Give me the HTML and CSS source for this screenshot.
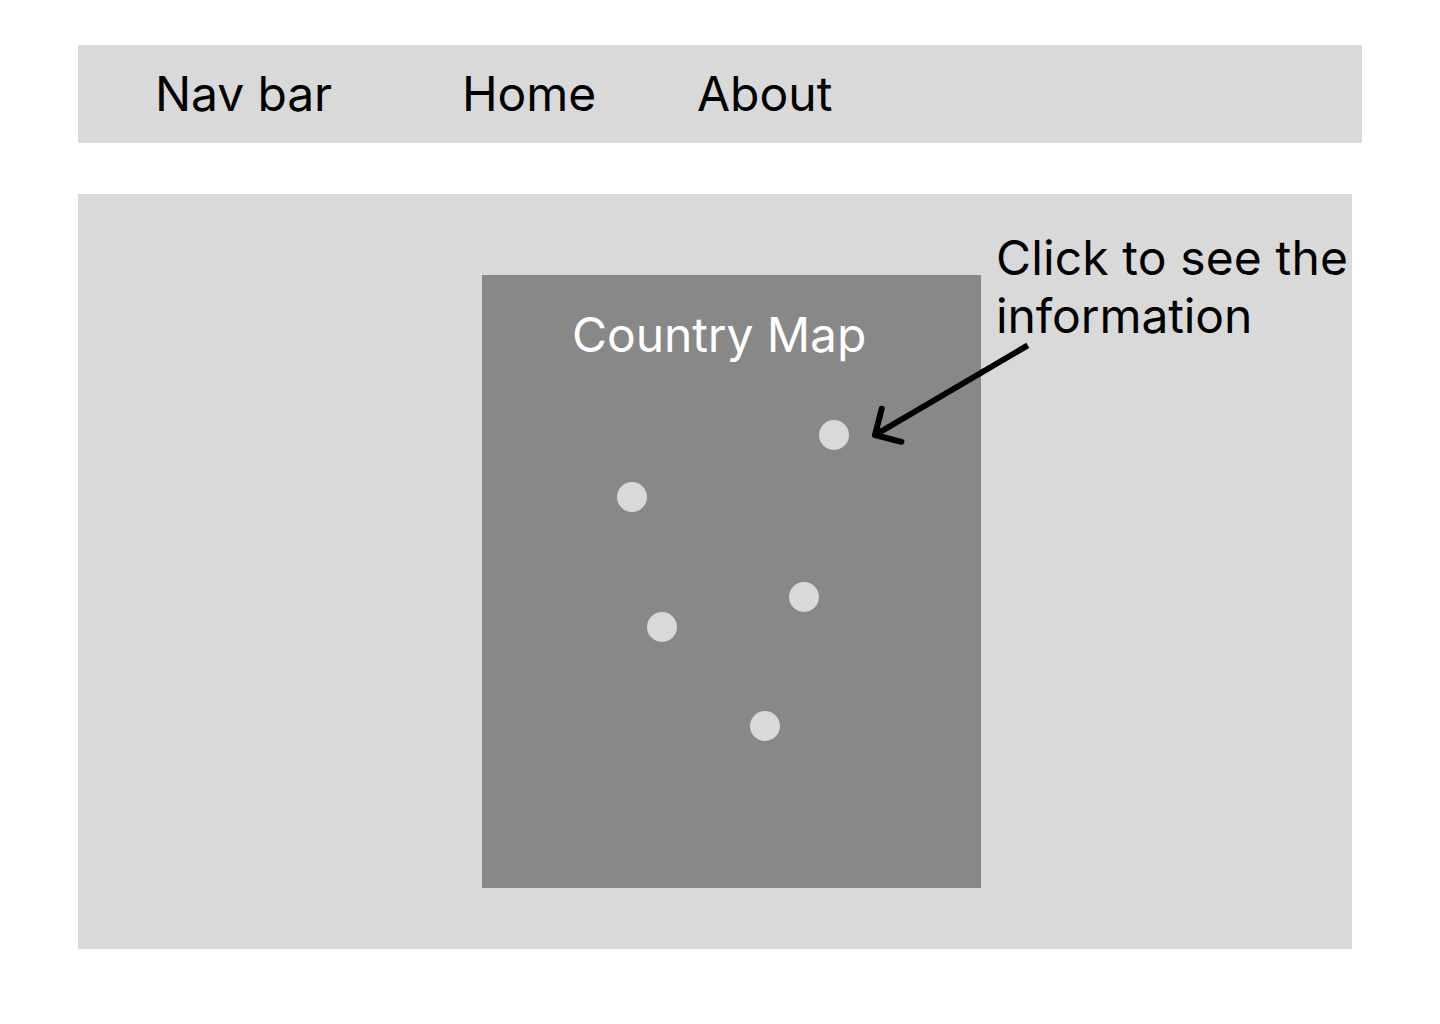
FILE: index.html
```html
<!DOCTYPE html>
<html lang="en">
<head>
<meta charset="utf-8">
<title>Country Map</title>
<link rel="stylesheet" href="styles.css">
</head>
<body>
<nav class="navbar">
  <span class="brand">Nav bar</span>
  <a class="link-home">Home</a>
  <a class="link-about">About</a>
</nav>
<main class="content">
  <section class="map">
    <h1 class="map-title">Country Map</h1>
    <span class="pin pin-1"></span>
    <span class="pin pin-2"></span>
    <span class="pin pin-3"></span>
    <span class="pin pin-4"></span>
    <span class="pin pin-5"></span>
  </section>
  <p class="hint"><span class="hint-lead">Click to see the</span><br>information</p>
  <svg class="arrow" width="170" height="110" viewBox="0 0 170 110" fill="none" stroke="#000" stroke-width="6">
    <path d="M162.8 4.4L10 94"/>
    <path d="M16.7 67.7L10 94L36.4 100.8" stroke-linecap="round" stroke-linejoin="round"/>
  </svg>
</main>
</body>
</html>
```
FILE: styles.css
```css
body {
  margin: 0;
  padding: 45px 78px 0;
  background: #fff;
  color: #000;
  font-family: Inter, sans-serif;
  font-size: 48px;
  line-height: 58px;
  letter-spacing: -0.1px;
}

.navbar {
  display: flex;
  box-sizing: border-box;
  width: 1284px;
  height: 98px;
  padding: 20px 0 0 77px;
  background: #d9d9d9;
}

.brand {
  width: 307px;
}

.link-home {
  width: 235px;
}

.link-about {
  letter-spacing: 0;
}

.content {
  position: relative;
  display: flex;
  align-items: flex-start;
  box-sizing: border-box;
  width: 1274px;
  height: 755px;
  margin-top: 51px;
  padding-left: 404px;
  background: #d9d9d9;
}

.map {
  position: relative;
  flex: none;
  box-sizing: border-box;
  width: 499px;
  height: 613px;
  margin-top: 81px;
  padding: 31px 0 0 90px;
  background: #888;
}

.map-title {
  margin: 0;
  color: #fff;
  font-size: 48px;
  font-weight: 400;
}

.pin {
  position: absolute;
  width: 30px;
  height: 30px;
  border-radius: 50%;
  background: #d9d9d9;
}

.pin-1 { left: 337px; top: 145px; }
.pin-2 { left: 135px; top: 207px; }
.pin-3 { left: 307px; top: 307px; }
.pin-4 { left: 165px; top: 337px; }
.pin-5 { left: 268px; top: 436px; }

.hint {
  margin: 35px 0 0 15px;
  white-space: nowrap;
}

.hint-lead {
  letter-spacing: 0.13px;
}

.arrow {
  position: absolute;
  left: 787px;
  top: 147px;
}
```
